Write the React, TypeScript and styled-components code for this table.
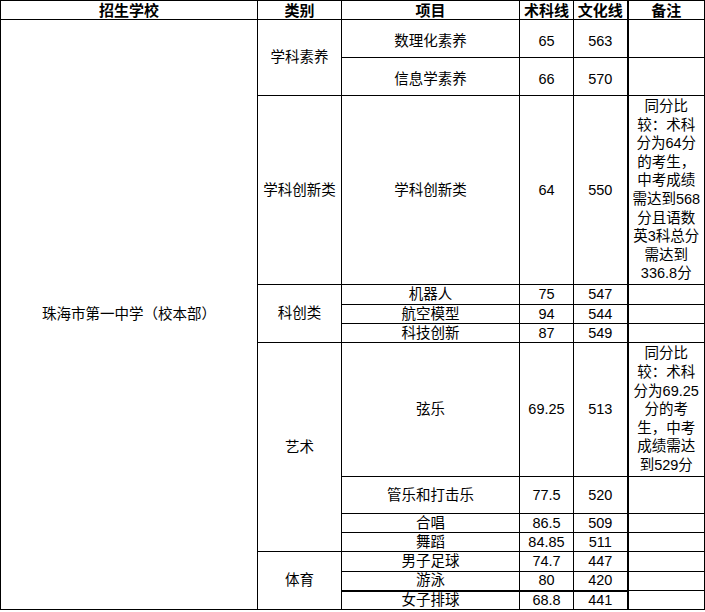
import React from "react";
import styled, { createGlobalStyle } from "styled-components";

const Global = createGlobalStyle`
  html, body { margin: 0; padding: 0; background: #fff; }
  body { font-family: "Liberation Sans", "Noto Sans CJK SC", sans-serif; color: #000; }
`;

const Table = styled.table`
  border-collapse: collapse;
  table-layout: fixed;
  width: 704px;
  font-size: 14.5px;
  color: #000;
`;

const Row = styled.tr<{ $h: number }>`
  height: ${(p) => p.$h}px;
`;

const HeadCell = styled.th<{ $thickLeft?: boolean }>`
  border: 1px solid #000;
  ${(p) => (p.$thickLeft ? "border-left: 2px solid #000;" : "")}
  padding: 0;
  font-weight: bold;
  font-size: 15px;
  line-height: 17px;
  text-align: center;
  vertical-align: middle;
  white-space: nowrap;
`;

const Cell = styled.td<{ $thickBottom?: boolean; $lower?: boolean }>`
  border: 1px solid #000;
  ${(p) => (p.$thickBottom ? "border-bottom: 2px solid #000;" : "")}
  padding: ${(p) => (p.$lower ? "5px 0 0" : "0")};
  line-height: 17px;
  text-align: center;
  vertical-align: middle;
  white-space: nowrap;
`;

const NoteCell = styled.td`
  border: 1px solid #000;
  border-left: 2px solid #000;
  padding: 0;
  line-height: 18.6px;
  text-align: center;
  vertical-align: middle;
  white-space: nowrap;
`;

type Item = {
  cat?: { name: string; span: number };
  item: string;
  art: string;
  culture: string;
  h: number;
  note?: string[];
  thick?: boolean;
  lower?: boolean;
};

const rows: Item[] = [
  { cat: { name: "学科素养", span: 2 }, item: "数理化素养", art: "65", culture: "563", h: 38, lower: true },
  { item: "信息学素养", art: "66", culture: "570", h: 38, lower: true },
  {
    cat: { name: "学科创新类", span: 1 },
    item: "学科创新类",
    art: "64",
    culture: "550",
    h: 189,
    note: ["同分比", "较：术科", "分为64分", "的考生，", "中考成绩", "需达到568", "分且语数", "英3科总分", "需达到", "336.8分"],
  },
  { cat: { name: "科创类", span: 3 }, item: "机器人", art: "75", culture: "547", h: 20 },
  { item: "航空模型", art: "94", culture: "544", h: 19 },
  { item: "科技创新", art: "87", culture: "549", h: 19 },
  {
    cat: { name: "艺术", span: 4 },
    item: "弦乐",
    art: "69.25",
    culture: "513",
    h: 134,
    note: ["同分比", "较：术科", "分为69.25", "分的考", "生，中考", "成绩需达", "到529分"],
  },
  { item: "管乐和打击乐", art: "77.5", culture: "520", h: 37 },
  { item: "合唱", art: "86.5", culture: "509", h: 19 },
  { item: "舞蹈", art: "84.85", culture: "511", h: 19 },
  { cat: { name: "体育", span: 3 }, item: "男子足球", art: "74.7", culture: "447", h: 20 },
  { item: "游泳", art: "80", culture: "420", h: 19, thick: true },
  { item: "女子排球", art: "68.8", culture: "441", h: 19 },
];

export default function App() {
  return (
    <>
      <Global />
      <Table>
        <colgroup>
          <col style={{ width: 257 }} />
          <col style={{ width: 84 }} />
          <col style={{ width: 178 }} />
          <col style={{ width: 54 }} />
          <col style={{ width: 54 }} />
          <col style={{ width: 77 }} />
        </colgroup>
        <thead>
          <Row $h={19}>
            <HeadCell>招生学校</HeadCell>
            <HeadCell>类别</HeadCell>
            <HeadCell>项目</HeadCell>
            <HeadCell>术科线</HeadCell>
            <HeadCell>文化线</HeadCell>
            <HeadCell $thickLeft>备注</HeadCell>
          </Row>
        </thead>
        <tbody>
          {rows.map((r, i) => (
            <Row $h={r.h} key={i}>
              {i === 0 && <Cell rowSpan={rows.length}>珠海市第一中学（校本部）</Cell>}
              {r.cat && <Cell rowSpan={r.cat.span}>{r.cat.name}</Cell>}
              <Cell $thickBottom={r.thick} $lower={r.lower}>{r.item}</Cell>
              <Cell $thickBottom={r.thick} $lower={r.lower}>{r.art}</Cell>
              <Cell $thickBottom={r.thick} $lower={r.lower}>{r.culture}</Cell>
              <NoteCell>
                {r.note
                  ? r.note.map((line, j) => (
                      <React.Fragment key={j}>
                        {line}
                        {j < r.note!.length - 1 && <br />}
                      </React.Fragment>
                    ))
                  : null}
              </NoteCell>
            </Row>
          ))}
        </tbody>
      </Table>
    </>
  );
}
